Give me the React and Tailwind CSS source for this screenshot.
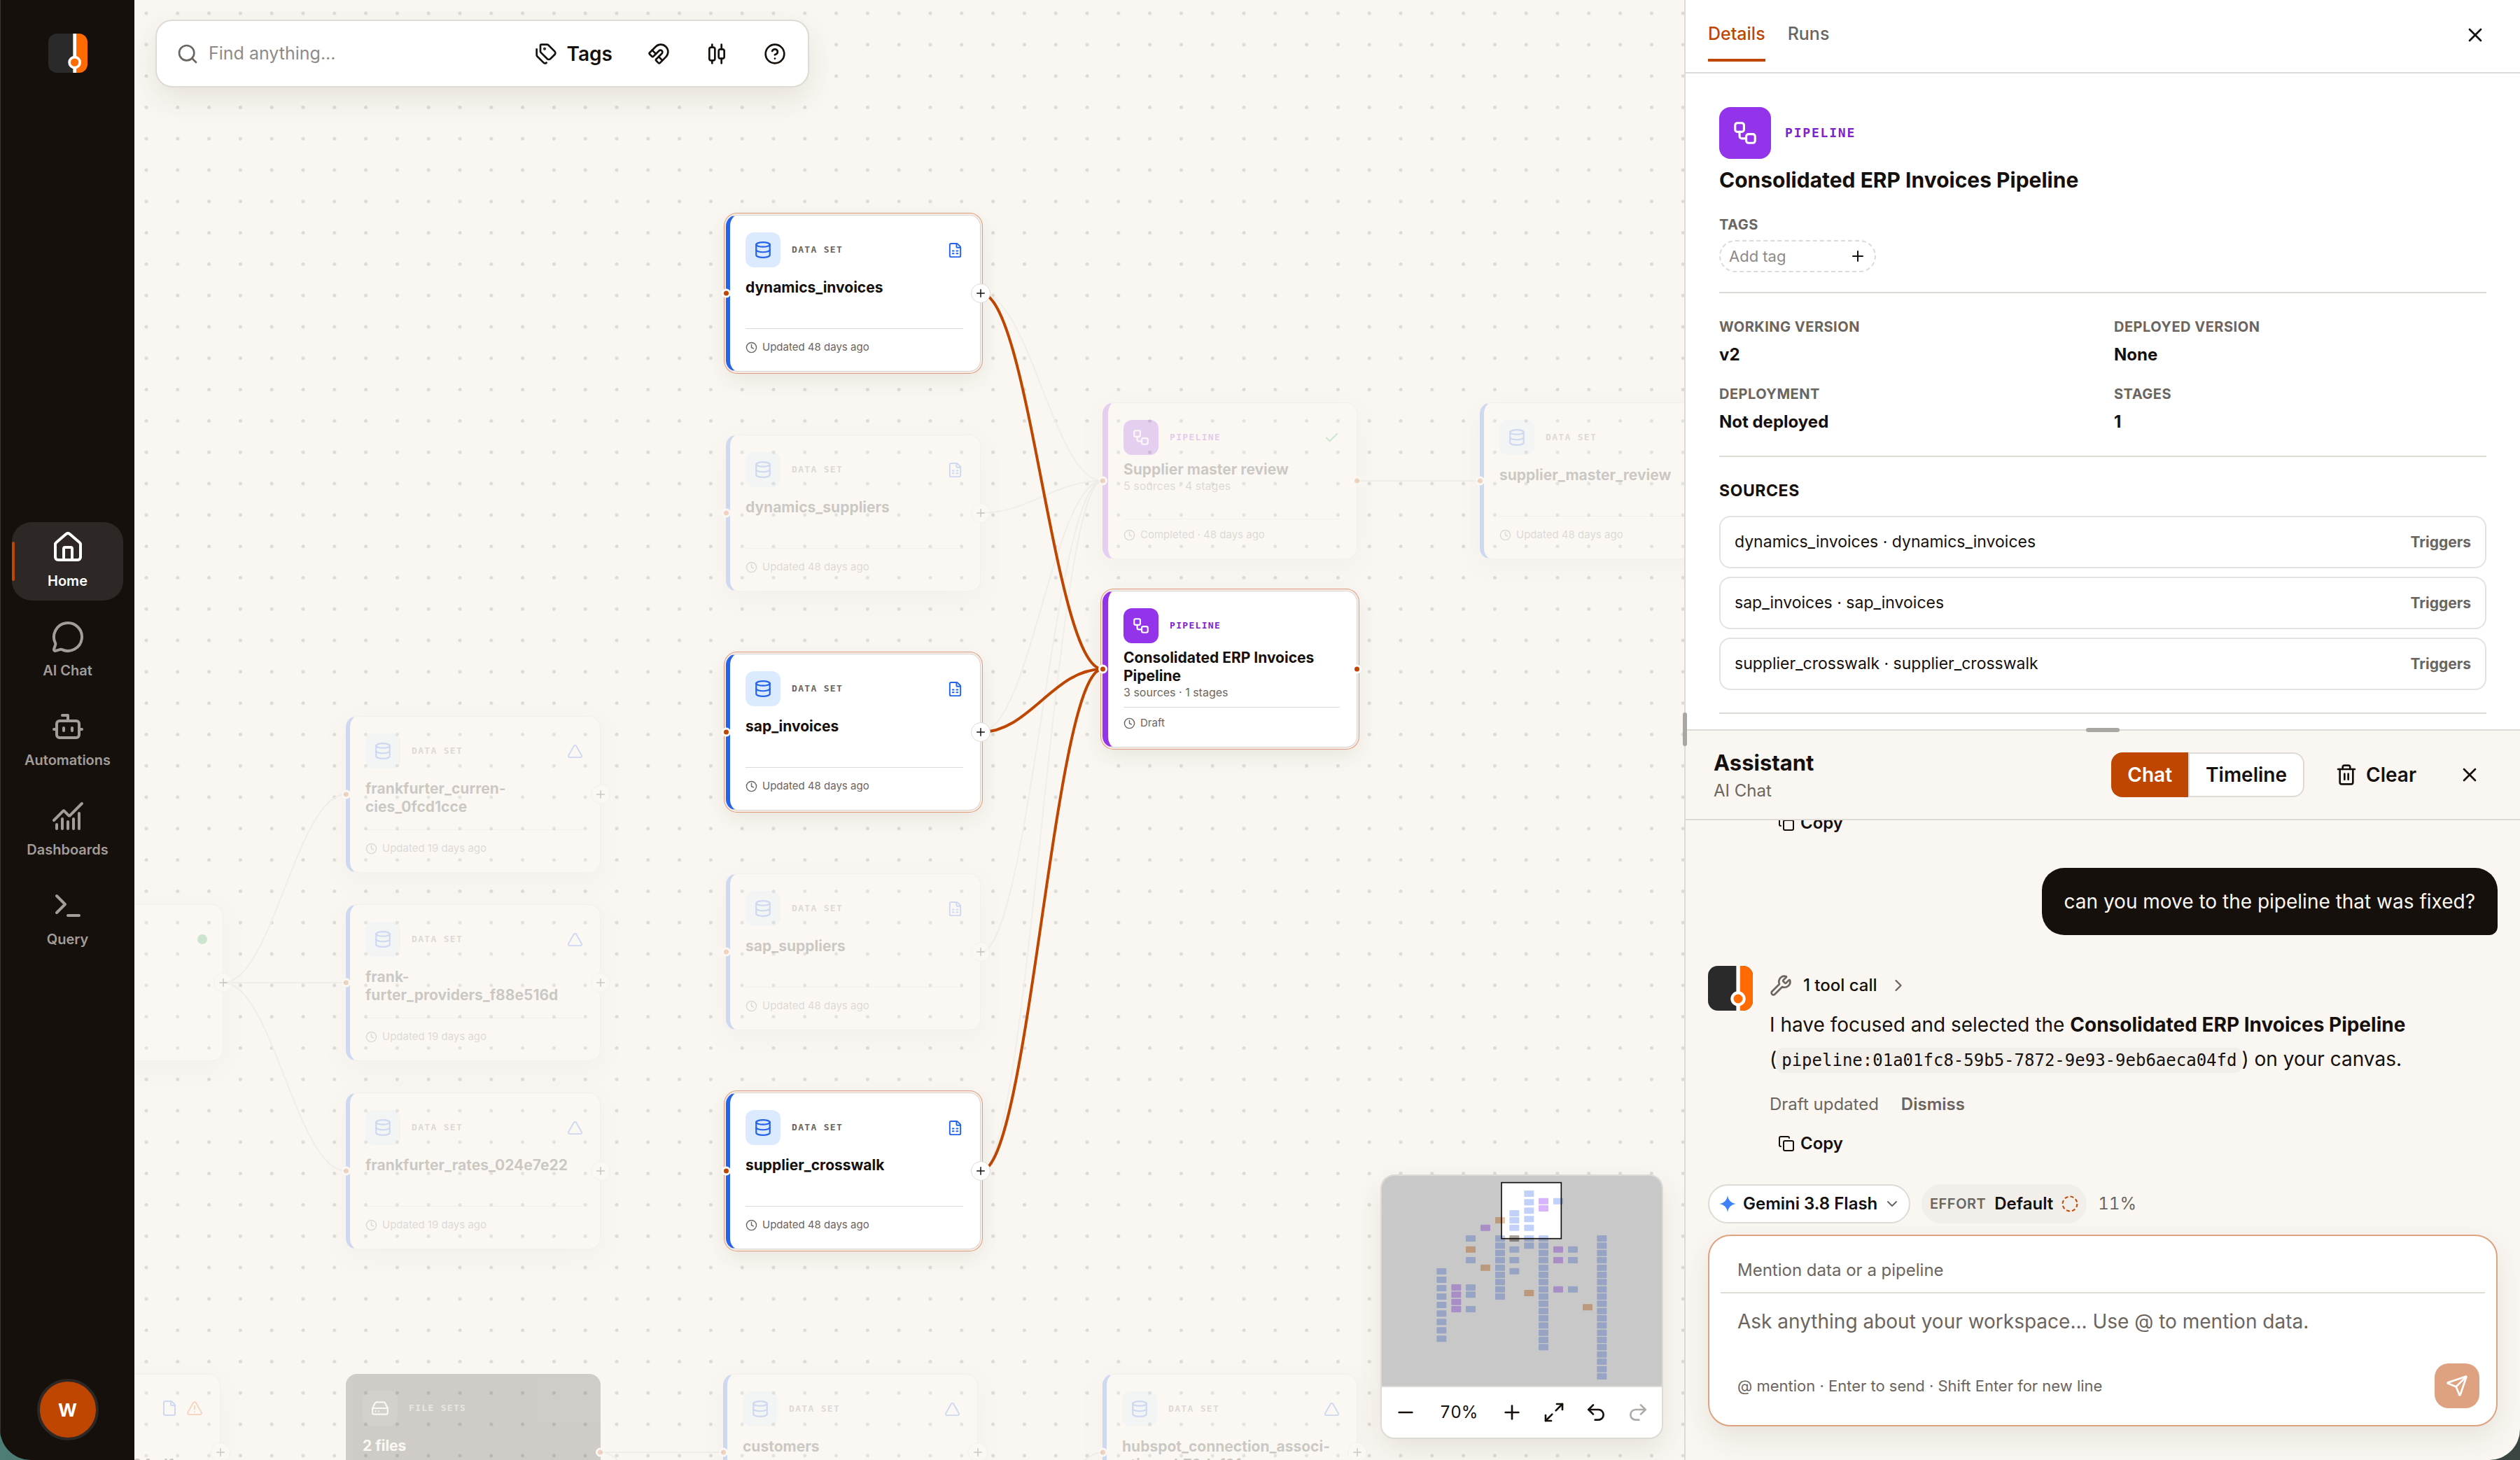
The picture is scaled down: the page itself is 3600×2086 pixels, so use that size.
import React, { useState } from 'react';
import {
  AlignHorizontalDistributeCenter, Bot, ChartNoAxesCombined, Check, ChevronDown, ChevronRight,
  CircleHelp, Clock, Copy, Database, File, FileSpreadsheet, HardDrive, House, Magnet, Maximize2,
  MessageCircle, Minus, Plus, Redo2, Search, Send, Tags, Terminal, Trash2, Triangle, TriangleAlert,
  Undo2, Workflow, Wrench, X,
} from 'lucide-react';

const CARD_W = 364;
const CARD_H = 224;

const nodes = [
  { id: 'dynamics_invoices', kind: 'dataset', x: 845, y: 307, title: 'dynamics_invoices', footer: 'Updated 48 days ago', badge: 'sheet', active: true },
  { id: 'dynamics_suppliers', kind: 'dataset', x: 845, y: 621, title: 'dynamics_suppliers', footer: 'Updated 48 days ago', badge: 'sheet' },
  { id: 'sap_invoices', kind: 'dataset', x: 845, y: 934, title: 'sap_invoices', footer: 'Updated 48 days ago', badge: 'sheet', active: true },
  { id: 'sap_suppliers', kind: 'dataset', x: 845, y: 1248, title: 'sap_suppliers', footer: 'Updated 48 days ago', badge: 'sheet' },
  { id: 'supplier_crosswalk', kind: 'dataset', x: 845, y: 1561, title: 'supplier_crosswalk', footer: 'Updated 48 days ago', badge: 'sheet', active: true },
  { id: 'review', kind: 'pipeline', x: 1383, y: 575, title: 'Supplier master review', sub: '5 sources · 4 stages', footer: 'Completed · 48 days ago', badge: 'check' },
  { id: 'erp', kind: 'pipeline', x: 1383, y: 844, title: 'Consolidated ERP Invoices Pipeline', sub: '3 sources · 1 stages', footer: 'Draft', active: true },
  { id: 'supplier_master_review', kind: 'dataset', x: 1922, y: 575, title: 'supplier_master_review', footer: 'Updated 48 days ago' },
  { id: 'currencies', kind: 'dataset', x: 302, y: 1023, title: 'frankfurter_curren-\ncies_0fcd1cce', footer: 'Updated 19 days ago', badge: 'triangle' },
  { id: 'providers', kind: 'dataset', x: 302, y: 1292, title: 'frank-\nfurter_providers_f88e516d', footer: 'Updated 19 days ago', badge: 'triangle' },
  { id: 'rates', kind: 'dataset', x: 302, y: 1561, title: 'frankfurter_rates_024e7e22', footer: 'Updated 19 days ago', badge: 'triangle' },
  { id: 'customers', kind: 'dataset', x: 841, y: 1963, title: 'customers', footer: 'Updated 19 days ago', badge: 'triangle' },
  { id: 'hubspot', kind: 'dataset', x: 1383, y: 1963, title: 'hubspot_connection_associ-\nations_b70daf0f', footer: 'Updated 19 days ago', badge: 'triangle' },
];

const activeEdges = [
  [1209, 419, 1383, 956],
  [1209, 1046, 1383, 956],
  [1209, 1673, 1383, 956],
];

const dimEdges = [
  [1209, 419, 1383, 687],
  [1209, 733, 1383, 687],
  [1209, 1046, 1383, 687],
  [1209, 1360, 1383, 687],
  [1209, 1673, 1383, 687],
  [1747, 687, 1922, 687],
  [127, 1404, 302, 1135],
  [127, 1404, 302, 1404],
  [127, 1404, 302, 1673],
  [666, 2075, 841, 2075],
  [666, 2075, 841, 2344],
  [1205, 2344, 1383, 2075],
];

const bezier = ([x1, y1, x2, y2]) => {
  const pull = (x2 - x1) * 0.4;
  return `M${x1} ${y1} C${x1 + pull} ${y1} ${x2 - pull} ${y2} ${x2} ${y2}`;
};

const Logo = ({ className }) => (
  <svg viewBox="0 0 64 64" className={className} aria-hidden="true">
    <clipPath id="logo-clip"><rect width="64" height="64" rx="14" /></clipPath>
    <g clipPath="url(#logo-clip)">
      <rect width="64" height="64" fill="#2a2a2a" />
      <rect x="43" width="21" height="64" fill="#ff6b00" />
      <rect x="40.4" width="5.4" height="64" fill="#fff" />
      <circle cx="43" cy="47" r="8.6" fill="#ff6b00" stroke="#fff" strokeWidth="4.2" />
    </g>
  </svg>
);

const Sidebar = () => {
  const items = [
    { label: 'Home', icon: House, active: true },
    { label: 'AI Chat', icon: MessageCircle },
    { label: 'Automations', icon: Bot },
    { label: 'Dashboards', icon: ChartNoAxesCombined },
    { label: 'Query', icon: Terminal },
  ];

  return (
    <aside className="w-48 shrink-0 bg-[#15100c] border-l border-[#3a3633] flex flex-col items-center pt-12 pb-7">
      <Logo className="size-14" />
      <nav className="flex-1 w-full px-4 pt-[42px] flex flex-col justify-center gap-4">
        {items.map(({ label, icon: Icon, active }) => (
          <a
            key={label}
            href="#"
            className={`relative h-28 rounded-[28px] flex flex-col items-center pt-3 gap-2.5 overflow-hidden text-xl font-semibold ${active ? 'bg-[#2d2826] text-white' : 'text-[#a29d99]'}`}
          >
            {active && <span className="absolute left-0 top-7 w-1 h-14 rounded-full bg-[#bf4600]" />}
            <Icon size={48} strokeWidth={2} />
            <span>{label}</span>
          </a>
        ))}
      </nav>
      <button className="size-22 rounded-full bg-[#bf4600] border-4 border-[#2d2826] text-white text-[26px] font-bold">W</button>
    </aside>
  );
};

const Handle = ({ side }) => (
  <span className={`absolute top-1/2 -translate-y-1/2 size-[13px] rounded-full bg-[#bf4600] border-[3px] border-white ${side === 'left' ? '-left-1.5' : '-right-1.5'}`} />
);

const AddHandle = () => (
  <button aria-label="Add next step" className="absolute top-1/2 -translate-y-1/2 -right-3.5 size-7 rounded-full bg-white border border-[#dedbd7] flex items-center justify-center">
    <Plus size={18} strokeWidth={2} />
  </button>
);

const badges = {
  sheet: <FileSpreadsheet size={23} className="text-[#2563eb]" />,
  triangle: <Triangle size={23} className="text-[#2563eb]" />,
  check: <Check size={23} className="text-[#16a34a]" />,
};

const NodeCard = ({ node }) => {
  const pipeline = node.kind === 'pipeline';
  return (
    <article
      className={`absolute ${node.active ? '' : 'opacity-20'}`}
      style={{ left: node.x, top: node.y, width: CARD_W, height: CARD_H }}
    >
      <div
        className={`size-full flex flex-col bg-white rounded-2xl border border-[#d9d6d2] pl-[22px] pr-6 pt-6 pb-6 ${pipeline ? 'border-l-8 border-l-[#9333ea]' : 'border-l-[6px] border-l-[#2563eb]'} ${node.active ? 'shadow-[0_0_0_2px_#f8ede6,0_0_0_3px_#dd9c7d,0_10px_30px_rgba(60,40,20,0.10)]' : 'shadow-[0_10px_30px_rgba(60,40,20,0.14)]'}`}
      >
        <div className="flex items-center">
          <div className={`size-[50px] rounded-xl flex items-center justify-center ${pipeline ? 'bg-[#9333ea] text-white' : 'bg-[#dbeafe] text-[#2563eb]'}`}>
            {pipeline ? <Workflow size={26} /> : <Database size={26} />}
          </div>
          <span className={`ml-4 font-['DejaVu_Sans_Mono',monospace] text-[13px] font-bold tracking-widest ${pipeline ? 'text-[#7e22ce]' : 'text-[#6b6560]'}`}>
            {pipeline ? 'PIPELINE' : 'DATA SET'}
          </span>
          <span className="ml-auto">{badges[node.badge]}</span>
        </div>
        <h3 className={`text-[21px] leading-[26px] font-bold whitespace-pre-line ${pipeline ? 'mt-2' : 'mt-4'}`}>{node.title}</h3>
        {node.sub && <p className="text-base leading-5 text-[#6b6560]">{node.sub}</p>}
        <div className={`mt-auto border-t border-[#dedbd7] flex items-center gap-[7px] text-[15px] leading-5 text-[#6b6560] ${pipeline ? 'pt-3' : 'pt-4'}`}>
          <Clock size={17} strokeWidth={2} /> {node.footer}
        </div>
      </div>
      <Handle side="left" />
      {pipeline || node.id === 'supplier_master_review' ? <Handle side="right" /> : <AddHandle />}
    </article>
  );
};

const Toolbar = () => (
  <div className="absolute left-[30px] top-7 w-[934px] h-[97px] rounded-3xl bg-white border-2 border-[#dedad5] shadow-[0_16px_40px_rgba(60,40,20,0.10)] flex items-center pl-7 pr-[31px]">
    <Search size={32} className="text-[#6b6560] shrink-0" />
    <input aria-label="Find anything" placeholder="Find anything..." className="ml-3.5 flex-1 min-w-0 text-[25px] outline-none placeholder:text-[#8e8a87]" />
    <button className="flex items-center gap-3.5 text-[28px] font-semibold">
      <Tags size={32} /> Tags
    </button>
    <div className="ml-[50px] flex gap-[51px]">
      <button aria-label="Snap"><Magnet size={32} /></button>
      <button aria-label="Distribute"><AlignHorizontalDistributeCenter size={32} /></button>
      <button aria-label="Help"><CircleHelp size={32} /></button>
    </div>
  </div>
);

const BLUE = '#c1d1fa';
const PURPLE = '#d8b4fe';
const ORANGE = '#efc4a0';

// [x, colour, list of tops]
const mapColumns = [
  [277, BLUE, [456, 492, 528, 564, 600, 637, 673, 709, 745]],
  [340, PURPLE, [525, 556, 587, 618]],
  [402, BLUE, [315, 408, 525, 556, 618]],
  [402, ORANGE, [362]],
  [465, PURPLE, [269]],
  [465, ORANGE, [440]],
  [528, ORANGE, [237]],
  [528, BLUE, [315, 346, 377, 408, 440, 471, 502, 533, 564]],
  [589, BLUE, [207, 237, 269, 362, 408, 455]],
  [589, '#aaa39f', [315]],
  [652, BLUE, [123, 160, 196, 232, 269, 315, 346]],
  [652, ORANGE, [549]],
  [714, PURPLE, [155, 186]],
  [714, BLUE, [315, 346, 377, 408, 440, 471, 502, 533, 564, 595, 626, 657, 688, 719, 750, 781]],
  [777, BLUE, [155]],
  [777, PURPLE, [362, 408, 533]],
  [840, BLUE, [362, 408, 533]],
  [903, ORANGE, [610]],
  [964, BLUE, [315, 346, 377, 408, 440, 471, 502, 533, 564, 595, 626, 657, 688, 719, 750, 781, 812, 843, 875, 906]],
];

const MiniMap = () => (
  <div className="absolute right-[30px] bottom-[30px] w-[404px] rounded-[20px] overflow-hidden bg-white border-2 border-[#dedad5] shadow-[0_16px_40px_rgba(60,40,20,0.10)]">
    <svg viewBox="42 60 1200 900" className="block w-full h-[300px]" aria-label="Canvas overview">
      {mapColumns.map(([x, fill, tops]) =>
        tops.map((y) => <rect key={`${x}-${y}`} x={x} y={y} width="42" height="27" rx="3" fill={fill} />)
      )}
      <path d="M42 60H1242V960H42Z M555 89V329H811V89Z" fill="#000" fillOpacity="0.216" fillRule="evenodd" />
      <rect x="555" y="89" width="256" height="240" fill="none" stroke="#15100c" strokeWidth="5" />
    </svg>
    <div className="h-[74px] border-t-2 border-[#dedad5] px-1 flex items-center">
      <button aria-label="Zoom out" className="w-15 flex justify-center"><Minus size={32} /></button>
      <span className="flex-1 text-center text-2xl tabular-nums">70%</span>
      <button aria-label="Zoom in" className="w-15 flex justify-center"><Plus size={32} /></button>
      <button aria-label="Fit view" className="w-15 flex justify-center"><Maximize2 size={32} /></button>
      <button aria-label="Undo" className="w-15 flex justify-center"><Undo2 size={32} /></button>
      <button aria-label="Redo" disabled className="w-15 flex justify-center text-[#adaaa7]"><Redo2 size={32} /></button>
    </div>
  </div>
);

const Canvas = () => (
  <main className="relative flex-1 min-w-0 overflow-hidden bg-[#faf7f2]">
    <svg className="absolute inset-0 size-full" aria-hidden="true">
      <pattern id="dots" x="-5.4" y="-3.4" width="44.8" height="44.8" patternUnits="userSpaceOnUse">
        <circle cx="22.4" cy="22.4" r="2.5" fill="#dedbd6" />
      </pattern>
      <rect width="100%" height="100%" fill="url(#dots)" />
      {dimEdges.map((e) => <path key={e.join()} d={bezier(e)} fill="none" stroke="#f1eeea" strokeWidth="2" />)}
      {activeEdges.map((e) => <path key={e.join()} d={bezier(e)} fill="none" stroke="#bf4600" strokeWidth="4" />)}
    </svg>

    {/* Connector cards that run off the left edge */}
    <article className="absolute -left-[237px] top-[1292px] w-[364px] h-[224px] opacity-20">
      <div className="size-full rounded-2xl bg-white border border-[#d9d6d2] shadow-[0_10px_30px_rgba(60,40,20,0.14)] pt-[42px] pr-[22px]">
        <span className="block ml-auto size-3.5 rounded-full bg-[#16a34a]" />
      </div>
      <AddHandle />
    </article>
    <article className="absolute -left-[241px] top-[1963px] w-[364px] h-[224px] opacity-20">
      <div className="size-full rounded-2xl bg-white border border-[#d9d6d2] shadow-[0_10px_30px_rgba(60,40,20,0.14)] pt-9 px-6">
        <div className="flex justify-end gap-3">
          <File size={24} className="text-[#2563eb]" />
          <TriangleAlert size={24} className="text-[#ea580c]" />
        </div>
        <h3 className="mt-[30px] text-[21px] leading-[26px] font-bold whitespace-pre-line">{'hubspot_\nconnection_deals_b124_d1'}</h3>
      </div>
      <AddHandle />
    </article>
    <article className="absolute left-[302px] top-[1963px] w-[364px] h-[224px] opacity-20">
      <div className="size-full rounded-2xl bg-[#292622] pt-6 px-6 text-white">
        <div className="flex items-center">
          <div className="size-[50px] rounded-xl bg-white/10 flex items-center justify-center"><HardDrive size={26} /></div>
          <span className="ml-4 font-['DejaVu_Sans_Mono',monospace] text-[13px] font-bold tracking-widest text-white/60">FILE SETS</span>
        </div>
        <h3 className="mt-4 text-[21px] leading-[26px] font-bold">2 files</h3>
      </div>
      <Handle side="right" />
    </article>

    {nodes.map((n) => <NodeCard key={n.id} node={n} />)}

    <Toolbar />
    <MiniMap />
  </main>
);

const DetailsPanel = () => {
  const facts = [
    ['WORKING VERSION', 'v2'],
    ['DEPLOYED VERSION', 'None'],
    ['DEPLOYMENT', 'Not deployed'],
    ['STAGES', '1'],
  ];
  const sources = ['dynamics_invoices', 'sap_invoices', 'supplier_crosswalk'];

  return (
    <section className="bg-white">
      <div className="h-[105px] border-b-2 border-[#dedad5] pl-8 pr-12 flex items-start">
        <div className="flex gap-8 pt-2">
          <button className="h-20 pt-1.5 text-[25px] font-medium text-[#bf4600] border-b-4 border-[#bf4600]">Details</button>
          <button className="h-20 pt-1.5 text-[25px] font-medium text-[#6b6560] border-b-4 border-transparent">Runs</button>
        </div>
        <button aria-label="Close details" className="ml-auto mt-[34px]"><X size={32} /></button>
      </div>

      <div className="px-12 pt-12 pb-[22px]">
        <div className="flex items-center gap-5">
          <div className="size-[74px] rounded-2xl bg-[#9333ea] text-white flex items-center justify-center"><Workflow size={38} /></div>
          <span className="font-['DejaVu_Sans_Mono',monospace] text-lg font-bold tracking-widest text-[#7e22ce]">PIPELINE</span>
        </div>
        <h2 className="mt-2.5 text-[30px] leading-10 font-bold">Consolidated ERP Invoices Pipeline</h2>
        <label htmlFor="add-tag" className="mt-8 block text-xl leading-6 font-bold tracking-wide text-[#6b6560]">TAGS</label>
        <div className="mt-2.5 w-56 h-[46px] rounded-full border-2 border-dashed border-[#dedad5] flex items-center pl-3 pr-3">
          <input id="add-tag" placeholder="Add tag" className="flex-1 min-w-0 text-[22px] outline-none placeholder:text-[#8e8a87]" />
          <button aria-label="Add tag"><Plus size={24} /></button>
        </div>

        <dl className="mt-7 border-y-2 border-[#dedad5] py-8 grid grid-cols-2 gap-x-8 gap-y-6">
          {facts.map(([k, v]) => (
            <div key={k}>
              <dt className="text-xl leading-8 font-bold tracking-wide text-[#6b6560]">{k}</dt>
              <dd className="mt-2 text-2xl leading-8 font-bold">{v}</dd>
            </div>
          ))}
        </dl>

        <h3 className="mt-7 text-[23px] leading-10 font-bold tracking-wide">SOURCES</h3>
        <ul className="mt-4 flex flex-col gap-3 pb-8 border-b-2 border-[#dedad5]">
          {sources.map((s) => (
            <li key={s} className="h-[75px] px-5 rounded-2xl border-2 border-[#e3e2de] flex items-center justify-between text-[23px]">
              <span>{s} · {s}</span>
              <span className="text-[21px] font-bold text-[#6b6560]">Triggers</span>
            </li>
          ))}
        </ul>
      </div>
    </section>
  );
};

const CopyButton = () => (
  <button className="ml-3 h-12 flex items-center gap-2 text-2xl font-semibold">
    <Copy size={24} strokeWidth={2} /> Copy
  </button>
);

const AssistantPanel = () => {
  const [draft, setDraft] = useState('');

  return (
    <section className="relative flex-1 min-h-0 flex flex-col bg-[#faf7f2] border-t-2 border-[#dedad5]">
      <span className="absolute left-1/2 -translate-x-1/2 -top-1 w-12 h-1.5 rounded-full bg-[#aaa7a2]" />
      <header className="h-32 shrink-0 border-b-2 border-[#dedad5] pl-10 pr-14 flex items-center">
        <div className="pt-1.5">
          <h2 className="text-[31px] leading-10 font-bold">Assistant</h2>
          <p className="text-2xl leading-10 text-[#6b6560]">AI Chat</p>
        </div>
        <div className="ml-auto h-16 flex text-[28px] font-semibold">
          <button className="px-[23px] rounded-l-2xl bg-[#bf4600] text-white">Chat</button>
          <button className="px-[23px] rounded-r-2xl bg-white border-2 border-[#dedad5]">Timeline</button>
        </div>
        <button className="ml-11 flex items-center gap-3 text-[28px] font-semibold">
          <Trash2 size={32} /> Clear
        </button>
        <button aria-label="Close assistant" className="ml-[60px]"><X size={32} /></button>
      </header>

      <div className="flex-1 min-h-0 overflow-hidden flex flex-col justify-end px-8 pb-[34px]">
        <div className="ml-22 shrink-0"><CopyButton /></div>
        <p className="mt-10 self-end shrink-0 rounded-[32px] rounded-br-xl bg-[#15100c] text-[#faf7f2] text-[28px] leading-8 p-8">
          can you move to the pipeline that was fixed?
        </p>
        <div className="mt-11 shrink-0 flex gap-6">
          <Logo className="size-16 shrink-0" />
          <div className="flex-1 min-w-0">
            <button className="h-14 flex items-center text-2xl font-medium">
              <Wrench size={32} className="text-[#6b6560] mr-4" /> 1 tool call
              <ChevronRight size={28} className="text-[#6b6560] ml-4" />
            </button>
            <p className="mt-1 text-[28px] leading-[49px]">
              I have focused and selected the <strong className="font-[650]">Consolidated ERP Invoices Pipeline</strong>
              <br />
              (<code className="px-[7px] py-1 rounded-lg bg-[#f2eeea] font-['DejaVu_Sans_Mono',monospace] text-2xl">pipeline:01a01fc8-59b5-7872-9e93-9eb6aeca04fd</code>) on your canvas.
            </p>
            <div className="mt-6 flex gap-8 text-2xl leading-8 text-[#6b6560]">
              <span>Draft updated</span>
              <button className="font-semibold">Dismiss</button>
            </div>
            <div className="mt-4"><CopyButton /></div>
          </div>
        </div>
      </div>

      <form className="shrink-0 px-8 pb-12" onSubmit={(e) => e.preventDefault()}>
        <div className="flex items-center gap-4 text-2xl">
          <div className="relative h-14 rounded-full bg-white border-2 border-[#dedad5] flex items-center pl-3.5 pr-3">
            <svg viewBox="0 0 24 24" className="size-6 mr-2.5" aria-hidden="true">
              <path d="M12 0c1 7 5 11 12 12-7 1-11 5-12 12-1-7-5-11-12-12C7 11 11 7 12 0Z" fill="#3b82f6" />
            </svg>
            <select aria-label="Model" className="appearance-none bg-transparent font-semibold outline-none">
              <option>Gemini 3.8 Flash</option>
            </select>
            <ChevronDown size={24} className="text-[#6b6560] ml-2" />
          </div>
          <div className="h-14 rounded-full bg-[#f2efea] flex items-center px-3">
            <label htmlFor="effort" className="text-xl font-semibold tracking-wide text-[#6b6560] mr-3">EFFORT</label>
            <select id="effort" className="appearance-none bg-transparent font-semibold outline-none">
              <option>Default</option>
            </select>
            <svg viewBox="0 0 24 24" className="size-6 ml-3" aria-hidden="true">
              <circle cx="12" cy="12" r="10.4" fill="none" stroke="#bf4600" strokeWidth="2" strokeDasharray="5 3.2" />
            </svg>
          </div>
          <span className="text-[#6b6560] tabular-nums">11%</span>
        </div>

        <div className="mt-4 rounded-[32px] bg-white border-2 border-[#dfa281] shadow-[0_16px_40px_rgba(60,40,20,0.10)] px-4 pt-4 pb-6">
          <input aria-label="Mention" placeholder="Mention data or a pipeline" className="block w-full h-[66px] px-6 border-b-2 border-[#dedcd6] text-2xl outline-none placeholder:text-[#6b6560]" />
          <textarea
            aria-label="Message"
            rows={1}
            value={draft}
            onChange={(e) => setDraft(e.target.value)}
            placeholder="Ask anything about your workspace... Use @ to mention data."
            className="block w-full h-[100px] px-6 pt-5 text-[28px] leading-10 resize-none outline-none placeholder:text-[#6b6560]"
          />
          <div className="pl-6 pr-2 flex items-center justify-between">
            <span className="text-[22px] text-[#6b6560]">@ mention · Enter to send · Shift Enter for new line</span>
            <button aria-label="Send" className="size-16 rounded-[20px] bg-[#dfa281] text-white flex items-center justify-center"><Send size={32} /></button>
          </div>
        </div>
      </form>
    </section>
  );
};

const App = () => (
  <div className="h-screen bg-linear-to-r from-[#4d7d74] to-[#3a4542] font-[Inter,sans-serif] text-[#15100c]">
    <div className="h-full flex rounded-b-[44px] overflow-hidden">
      <Sidebar />
      <Canvas />
      <div className="relative w-[1194px] shrink-0 border-l-2 border-[#dedad5] flex flex-col">
        <span className="absolute -left-1 top-[1018px] z-10 w-1.5 h-12 rounded-full bg-[#aaa7a2]" />
        <DetailsPanel />
        <AssistantPanel />
      </div>
    </div>
  </div>
);

export default App;
